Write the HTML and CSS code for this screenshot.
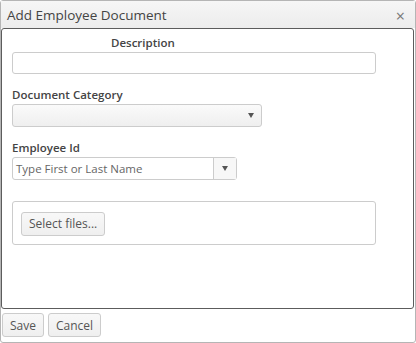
FILE: index.html
```html
<!DOCTYPE html>
<html>
<head>
<meta charset="utf-8">
<link rel="stylesheet" href="styles.css">
</head>
<body>
<div class="window">
  <div class="titlebar">
    <span class="title">Add Employee Document</span>
    <span class="close">×</span>
  </div>
  <div class="content">
    <div class="field first">
      <label class="lbl desc-lbl">Description</label>
      <input class="text wide" type="text">
    </div>
    <div class="field">
      <label class="lbl">Document Category</label>
      <div class="dropdown">
        <span class="arrow"></span>
      </div>
    </div>
    <div class="field">
      <label class="lbl">Employee Id</label>
      <div class="combo">
        <span class="placeholder">Type First or Last Name</span>
        <span class="combo-btn"><span class="arrow"></span></span>
      </div>
    </div>
    <div class="upload">
      <button class="btn">Select files...</button>
    </div>
  </div>
  <div class="footer">
    <button class="btn">Save</button>
    <button class="btn">Cancel</button>
  </div>
</div>
</body>
</html>
```
FILE: styles.css
```css
* { box-sizing: border-box; }
html, body { margin: 0; padding: 0; background: #fff; }
body { font-family: "Open Sans", "DejaVu Sans", sans-serif; color: #444; }
.window {
  width: 416px;
  height: 343px;
  border: 1px solid #b5b5b5;
  border-radius: 3px;
  display: flex;
  flex-direction: column;
  background: #fff;
}
.titlebar {
  height: 27px;
  background: linear-gradient(#f6f6f6, #ececec);
  display: flex;
  align-items: center;
  justify-content: space-between;
  padding: 0 10px 0 6px;
}
.title { font-size: 13.5px; color: #444; }
.close { font-size: 16px; color: #777; line-height: 1; margin-top: 2px; }
.content {
  height: 281px;
  margin: 0 1px 0 0;
  border: 1px solid #5c5c5c;
  border-radius: 3px;
  background: #fff;
  padding: 6px 0 0 10px;
  display: flex;
  flex-direction: column;
}
.field { display: flex; flex-direction: column; align-items: flex-start; margin-top: 13px; }
.field.first { margin-top: 0; }
.lbl { font-size: 11.5px; font-weight: 600; color: #444; line-height: 15px; margin-bottom: 2px; }
.desc-lbl { margin-left: 99px; margin-bottom: 2px; }
.text {
  height: 22px;
  border: 1px solid #ccc;
  border-radius: 3px;
  background: #fff;
}
.wide { width: 364px; }
.dropdown {
  width: 250px;
  height: 23px;
  border: 1px solid #ccc;
  border-radius: 3px;
  background: linear-gradient(#fafafa, #efefef);
  display: flex;
  align-items: center;
  justify-content: flex-end;
  padding-right: 7px;
}
.arrow {
  width: 0; height: 0;
  border-left: 3.5px solid transparent;
  border-right: 3.5px solid transparent;
  border-top: 5px solid #555;
}
.combo {
  width: 225px;
  height: 23px;
  border: 1px solid #ccc;
  border-radius: 3px;
  display: flex;
  align-items: stretch;
}
.placeholder { flex: 1; font-size: 11.5px; color: #666; padding-left: 3px; display: flex; align-items: center; }
.combo-btn {
  width: 23px;
  border-left: 1px solid #ccc;
  background: #f7f7f7;
  display: flex;
  align-items: center;
  justify-content: center;
}
.upload {
  margin-top: 21px;
  width: 364px;
  height: 44px;
  border: 1px solid #ccc;
  border-radius: 3px;
  padding: 9px 0 0 8px;
}
.btn {
  font-family: "Open Sans", "DejaVu Sans", sans-serif;
  font-size: 12px;
  color: #555;
  height: 24px;
  padding: 0 7px;
  border: 1px solid #ccc;
  border-radius: 3px;
  background: linear-gradient(#f8f8f8, #efefef);
}
.footer {
  flex: 1;
  display: flex;
  align-items: flex-start;
  gap: 4px;
  padding: 4px 0 0 1px;
}
```
